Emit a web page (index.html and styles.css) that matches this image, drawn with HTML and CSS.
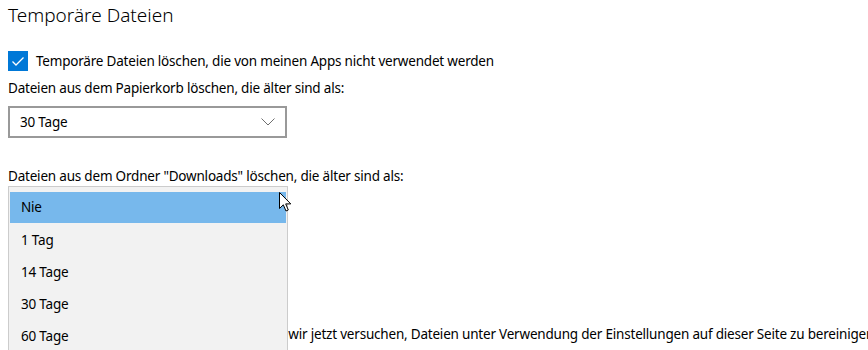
FILE: index.html
```html
<!DOCTYPE html>
<html lang="de">
<head>
<meta charset="utf-8">
<title>Temporäre Dateien</title>
<link rel="stylesheet" href="styles.css">
</head>
<body>
<main class="page">
  <h1 class="title">Temporäre Dateien</h1>
  <label class="check-row">
    <span class="checkbox">
      <svg width="20" height="20" viewBox="0 0 20 20"><polyline points="4.5,10.5 8,14 15.5,6.5" fill="none" stroke="#fff" stroke-width="1.3"/></svg>
    </span>
    <span class="check-text">Temporäre Dateien löschen, die von meinen Apps nicht verwendet werden</span>
  </label>
  <p class="label">Dateien aus dem Papierkorb löschen, die älter sind als:</p>
  <div class="select">
    <span>30 Tage</span>
    <svg class="chevron" width="14" height="8" viewBox="0 0 14 8"><polyline points="0.5,0.5 7,7 13.5,0.5" fill="none" stroke="#6e6e6e" stroke-width="1"/></svg>
  </div>
  <div class="field">
    <p class="label">Dateien aus dem Ordner "Downloads" löschen, die älter sind als:</p>
    <ul class="popup">
      <li class="item selected">Nie</li>
      <li class="item">1 Tag</li>
      <li class="item">14 Tage</li>
      <li class="item">30 Tage</li>
      <li class="item">60 Tage</li>
    </ul>
    <svg class="cursor" width="13" height="20" viewBox="0 0 13 20"><path d="M0.5,0.5 L0.5,16.5 L4.3,12.8 L7,19 L9.3,18 L6.7,11.9 L11.8,11.9 Z" fill="#fff" stroke="#000" stroke-width="1" stroke-linejoin="miter"/></svg>
  </div>
  <p class="note"><span class="note-hidden">Wenn Sie jetzt Speicherplatz freigeben, werden</span> wir jetzt versuchen, Dateien unter Verwendung der Einstellungen auf dieser Seite zu bereinigen.</p>
</main>
</body>
</html>
```
FILE: styles.css
```css
* { box-sizing: border-box; }
html, body { margin: 0; padding: 0; background: #fff; }
body {
  font-family: "Noto Sans", "Open Sans", sans-serif;
  color: #000;
  font-size: 13.5px;
  letter-spacing: -0.2px;
  width: 868px;
  height: 350px;
  overflow: hidden;
}
.page {
  padding: 0 0 0 8px;
  display: flex;
  flex-direction: column;
  align-items: flex-start;
}
.title {
  margin: 1px 0 0 0;
  font-size: 19px;
  font-weight: 300;
  letter-spacing: 0;
  line-height: 28px;
}
.check-row {
  margin-top: 22px;
  display: flex;
  align-items: center;
  gap: 8px;
  height: 20px;
}
.checkbox {
  width: 20px;
  height: 20px;
  background: #0078d7;
  display: block;
}
.checkbox svg { display: block; }
.check-text { line-height: 20px; }
.label {
  margin: 7px 0 0 0;
  line-height: 20px;
}
.select {
  margin-top: 8px;
  width: 279px;
  height: 32px;
  border: 2px solid #999;
  display: flex;
  align-items: center;
  justify-content: space-between;
  padding: 0 10px 0 10px;
}
.chevron { display: block; }
.field {
  position: relative;
  margin-top: 28px;
}
.field .label { margin: 0; }
.popup {
  position: absolute;
  left: 0;
  top: 20px;
  width: 280px;
  height: 180px;
  margin: 0;
  padding: 5px 1px 0 1px;
  list-style: none;
  background: #f2f2f2;
  border: 1px solid #cccccc;
  z-index: 2;
}
.item {
  height: 32px;
  line-height: 32px;
  padding-left: 11px;
}
.item.selected {
  background: #77b8ec;
  height: 31px;
  line-height: 30px;
  margin-bottom: 1px;
}
.cursor {
  position: absolute;
  left: 271px;
  top: 26px;
  z-index: 3;
}
.note {
  margin: 138px 0 0 0;
  line-height: 20px;
  white-space: nowrap;
}
.note-hidden {
  display: inline-block;
  width: 277px;
  overflow: hidden;
  white-space: nowrap;
  vertical-align: top;
}
```
